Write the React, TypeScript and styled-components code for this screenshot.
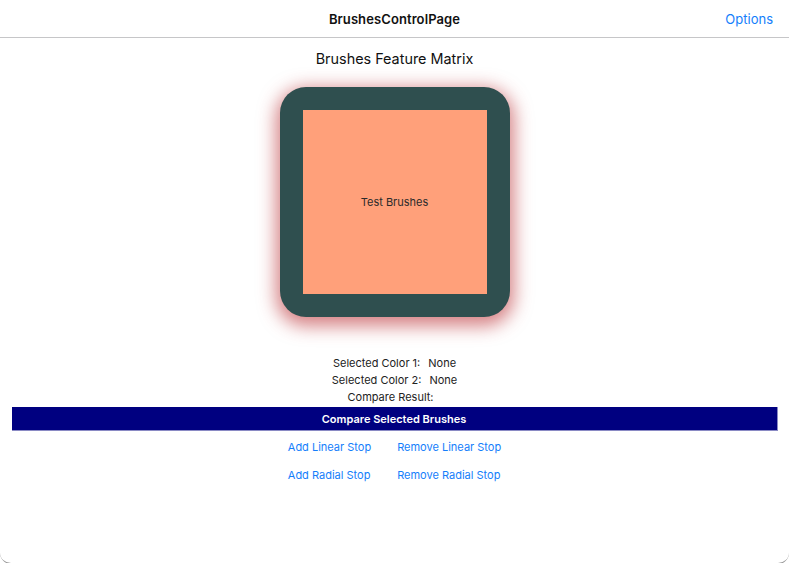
import React from "react";
import styled, { createGlobalStyle } from "styled-components";

const Global = createGlobalStyle`
  html, body { margin: 0; padding: 0; background: #ffffff; }
  body { font-family: Inter, "Noto Sans", Roboto, sans-serif; overflow: hidden; }
`;

const Window = styled.div`
  width: 789px;
  height: 564px;
  box-sizing: border-box;
  border-bottom: 1px solid #9a9a9a;
  border-radius: 0 0 11px 11px;
  display: flex;
  flex-direction: column;
  background: #ffffff;
  overflow: hidden;
`;

const NavBar = styled.header`
  height: 37px;
  flex: none;
  display: grid;
  grid-template-columns: 1fr auto 1fr;
  align-items: center;
  border-bottom: 1px solid #c6c6c8;
`;

const NavTitle = styled.div`
  grid-column: 2;
  font-size: 13px;
  font-weight: 600;
  color: #111;
  letter-spacing: 0.1px;
`;

const NavAction = styled.div`
  grid-column: 3;
  justify-self: end;
  padding-right: 16px;
  font-size: 13px;
  color: #147efb;
`;

const Content = styled.main`
  display: flex;
  flex-direction: column;
  align-items: center;
`;

const Heading = styled.div`
  margin-top: 11px;
  font-size: 14.4px;
  color: #111;
  line-height: 19px;
`;

const BrushFrame = styled.div`
  margin-top: 19px;
  width: 230px;
  height: 230px;
  box-sizing: border-box;
  padding: 23px;
  background: #2f4f4f;
  border-radius: 26px;
  box-shadow: 0 5px 18px 4px rgba(185, 45, 50, 0.6);
  display: flex;
`;

const BrushFill = styled.div`
  flex: 1;
  background: #ffa07a;
  display: flex;
  align-items: center;
  justify-content: center;
  font-size: 11px;
  color: #2b2b2b;
`;

const Info = styled.div`
  margin-top: 38px;
  display: flex;
  flex-direction: column;
  align-items: center;
`;

const InfoRow = styled.div`
  display: flex;
  gap: 8px;
  font-size: 11px;
  line-height: 17px;
  color: #222;
`;

const CompareButton = styled.div`
  margin-top: 1px;
  width: 766px;
  height: 24px;
  box-sizing: border-box;
  background: #000080;
  border-bottom: 1px solid #8a8ac4;
  border-right: 1px solid #8a8ac4;
  color: #ffffff;
  font-size: 11px;
  font-weight: 600;
  display: flex;
  align-items: center;
  justify-content: center;
`;

const StopGrid = styled.div`
  margin-top: 9px;
  display: grid;
  grid-template-columns: auto auto;
  column-gap: 26px;
  row-gap: 14px;
`;

const StopLink = styled.div`
  font-size: 11px;
  line-height: 14px;
  color: #147efb;
`;

export default function App() {
  return (
    <>
      <Global />
      <Window>
        <NavBar>
          <NavTitle>BrushesControlPage</NavTitle>
          <NavAction>Options</NavAction>
        </NavBar>
        <Content>
          <Heading>Brushes Feature Matrix</Heading>
          <BrushFrame>
            <BrushFill>Test Brushes</BrushFill>
          </BrushFrame>
          <Info>
            <InfoRow>
              <span>Selected Color 1:</span>
              <span>None</span>
            </InfoRow>
            <InfoRow>
              <span>Selected Color 2:</span>
              <span>None</span>
            </InfoRow>
            <InfoRow>
              <span>Compare Result:</span>
              <span></span>
            </InfoRow>
          </Info>
          <CompareButton>Compare Selected Brushes</CompareButton>
          <StopGrid>
            <StopLink>Add Linear Stop</StopLink>
            <StopLink>Remove Linear Stop</StopLink>
            <StopLink>Add Radial Stop</StopLink>
            <StopLink>Remove Radial Stop</StopLink>
          </StopGrid>
        </Content>
      </Window>
    </>
  );
}
